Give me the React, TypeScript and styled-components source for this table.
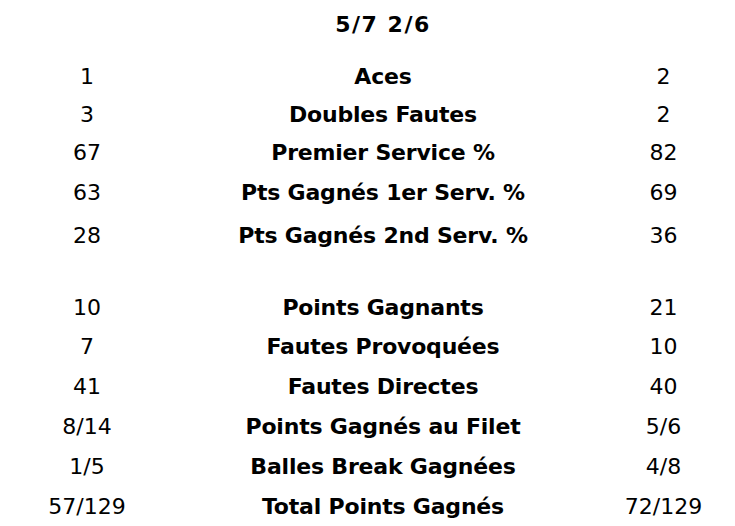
import React from 'react';
import styled, { createGlobalStyle } from 'styled-components';

const GlobalStyle = createGlobalStyle`
  body {
    margin: 0;
    background: #ffffff;
    font-family: "DejaVu Sans", Verdana, sans-serif;
    color: #000000;
  }
`;

const Page = styled.div`
  width: 735px;
  height: 526px;
  overflow: hidden;
`;

const Score = styled.div`
  height: 48px;
  display: grid;
  grid-template-columns: 174px 418px 143px;
  align-items: center;
  font-size: 22px;
  font-weight: bold;
  letter-spacing: 1.5px;
  & > span { grid-column: 2; text-align: center; }
`;

const Table = styled.div`
  display: grid;
  grid-template-columns: 174px 418px 143px;
  padding-top: 8px;
`;

const Row = styled.div<{ h: number }>`
  display: contents;
  & > div { height: ${p => p.h}px; }
`;

const Value = styled.div`
  display: flex;
  align-items: center;
  justify-content: center;
  font-size: 22px;
`;

const Label = styled(Value)`
  font-weight: bold;
  letter-spacing: -0.2px;
`;

const Spacer = styled.div<{ h: number }>`
  grid-column: 1 / -1;
  height: ${p => p.h}px;
`;

type Stat = { left: string; label: string; right: string; h: number };

const serveStats: Stat[] = [
  { left: '1', label: 'Aces', right: '2', h: 40 },
  { left: '3', label: 'Doubles Fautes', right: '2', h: 36 },
  { left: '67', label: 'Premier Service %', right: '82', h: 40 },
  { left: '63', label: 'Pts Gagnés 1er Serv. %', right: '69', h: 40 },
  { left: '28', label: 'Pts Gagnés 2nd Serv. %', right: '36', h: 46 },
];

const pointStats: Stat[] = [
  { left: '10', label: 'Points Gagnants', right: '21', h: 40 },
  { left: '7', label: 'Fautes Provoquées', right: '10', h: 39 },
  { left: '41', label: 'Fautes Directes', right: '40', h: 40 },
  { left: '8/14', label: 'Points Gagnés au Filet', right: '5/6', h: 40 },
  { left: '1/5', label: 'Balles Break Gagnées', right: '4/8', h: 40 },
  { left: '57/129', label: 'Total Points Gagnés', right: '72/129', h: 40 },
];

const StatRow = ({ s }: { s: Stat }) => (
  <Row h={s.h}>
    <Value>{s.left}</Value>
    <Label>{s.label}</Label>
    <Value>{s.right}</Value>
  </Row>
);

export default function App() {
  return (
    <>
      <GlobalStyle />
      <Page>
        <Score><span>5/7 2/6</span></Score>
        <Table>
          {serveStats.map(s => <StatRow key={s.label} s={s} />)}
          <Spacer h={29} />
          {pointStats.map(s => <StatRow key={s.label} s={s} />)}
        </Table>
      </Page>
    </>
  );
}
